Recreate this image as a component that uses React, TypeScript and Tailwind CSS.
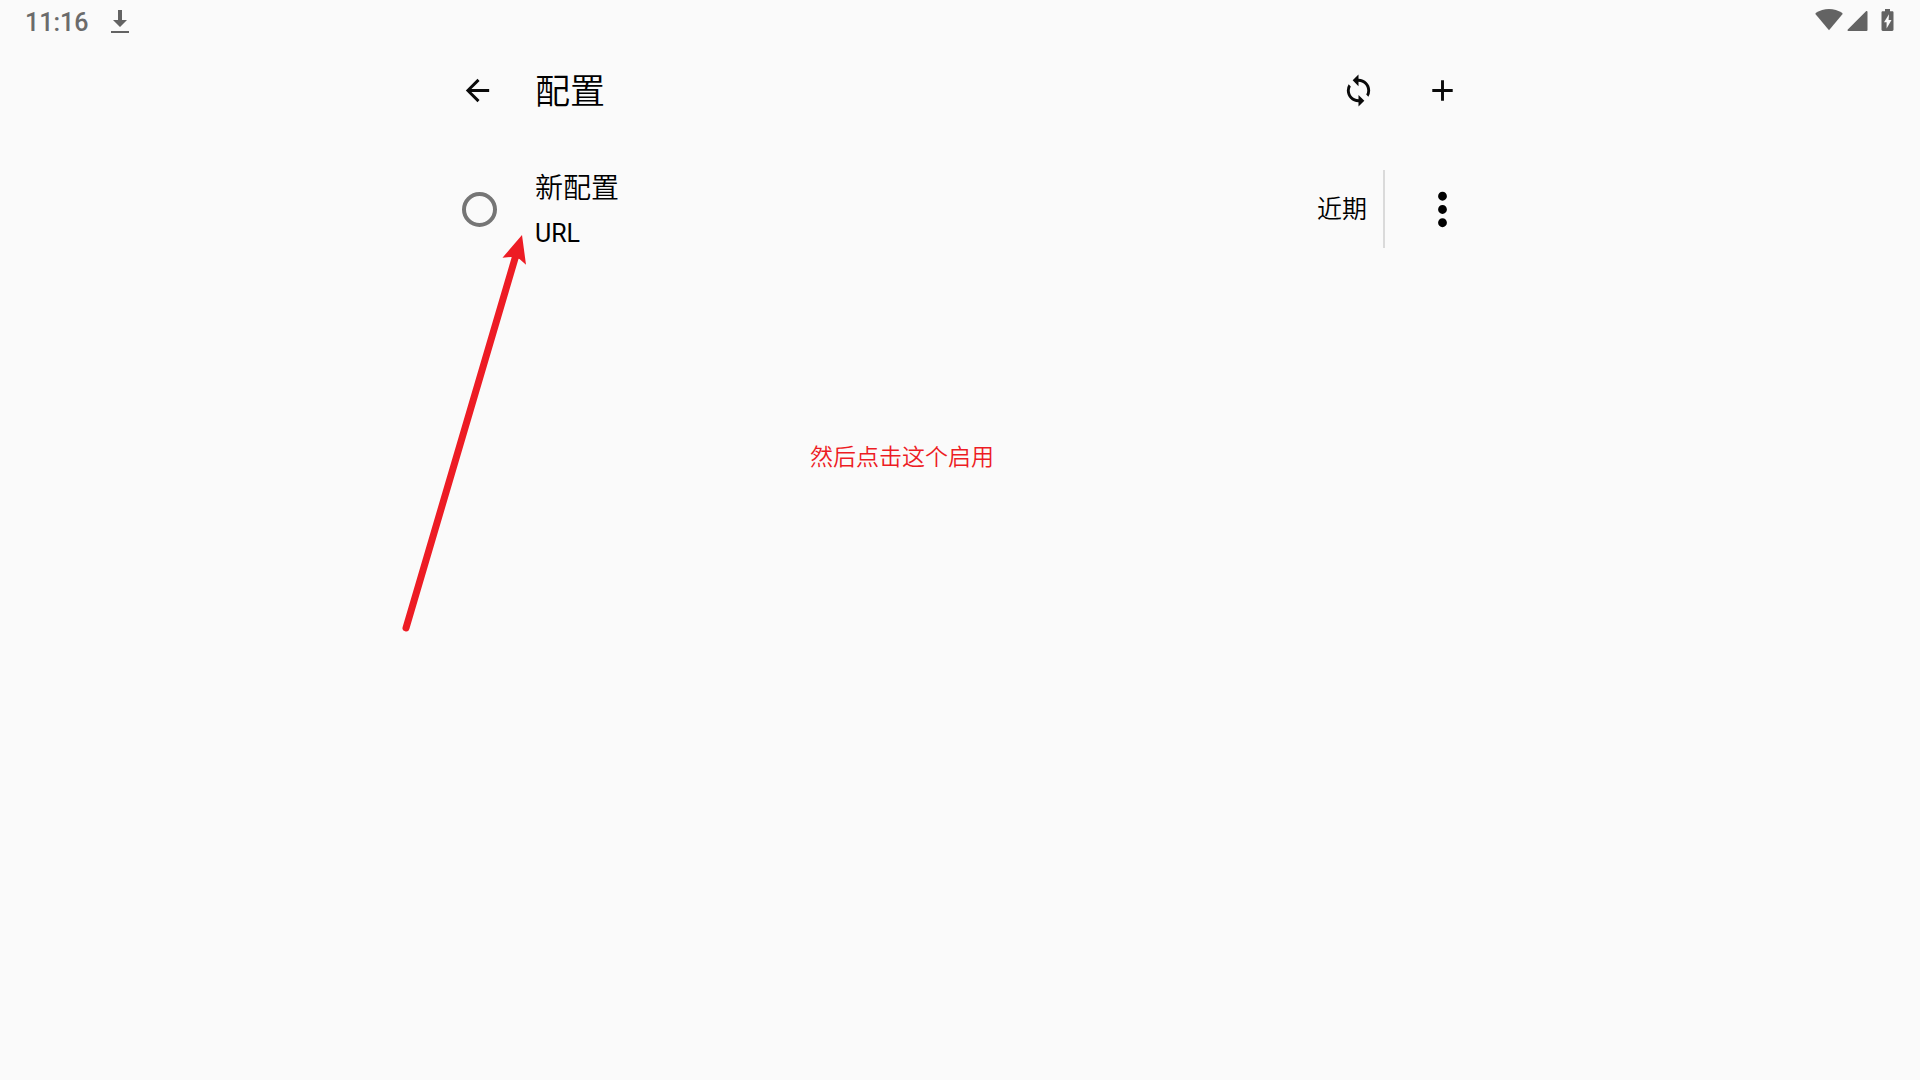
import { useState } from 'react';
import { MdAdd, MdArrowBack, MdMoreVert, MdSync } from 'react-icons/md';

type Profile = {
  id: string;
  name: string;
  type: string;
  updated: string;
};

const profiles: Profile[] = [{ id: 'new', name: '新配置', type: 'URL', updated: '近期' }];

function StatusBar() {
  return (
    <header className="flex h-[42px] items-start justify-between px-[25px] text-[#636363]">
      <div className="flex items-start gap-[23px] pt-2">
        <span className="text-[25px] leading-[30px] font-medium text-[#6b6b6b]">11:16</span>
        <svg className="h-7 w-[18px]" viewBox="0 0 18 28" fill="currentColor" aria-hidden="true">
          <path d="M7 2h4v10h5l-7 7-7-7h5z" />
          <path d="M0 23h18v2H0z" />
        </svg>
      </div>
      <div className="flex items-start gap-1 pt-2 pr-px" aria-hidden="true">
        <svg className="h-6 w-7" viewBox="0 0 28 24" fill="currentColor">
          <path d="M14 22.300.8 6.600C.300 6 .300 5.200 1 4.700 4.800 2.200 9.200.9 14 .9s9.200 1.300 13 3.800c.7.500.7 1.300.2 1.900z" />
        </svg>
        <svg className="h-6 w-[21px]" viewBox="0 0 21 24" fill="currentColor">
          <path d="M20.500 3.800V22a1 1 0 0 1-1 1H1.300C.500 23 .200 22.200.8 21.600L19 3.200c.6-.6 1.500-.2 1.500.6z" />
        </svg>
        <svg className="ml-[9px] h-6 w-[13px]" viewBox="0 0 13 24" fill="currentColor">
          <path
            fillRule="evenodd"
            d="M4 1h5v2.300h2.200c.8 0 1.300.5 1.300 1.300v17c0 .8-.5 1.300-1.300 1.300H1.800C1 22.900.5 22.400.5 21.600v-17c0-.8.5-1.300 1.300-1.300H4zM8 6.300 3 14.300h2.600v6.200L10.500 12H7.600z"
          />
        </svg>
      </div>
    </header>
  );
}

function Toolbar() {
  return (
    <div className="flex h-24 items-center pr-px text-[#0a0a0a]">
      <button type="button" aria-label="返回" className="flex size-[84px] items-center justify-center">
        <MdArrowBack size={35} />
      </button>
      <h1 className="ml-4 flex-1 pt-1.5 text-[35px] leading-[48px] font-[350] text-black">配置</h1>
      <button type="button" aria-label="更新" className="flex size-[84px] items-center justify-center">
        <MdSync size={35} />
      </button>
      <button type="button" aria-label="添加" className="flex size-[84px] items-center justify-center">
        <MdAdd size={35} />
      </button>
    </div>
  );
}

function ProfileRow({ profile, active, onSelect }: { profile: Profile; active: boolean; onSelect: () => void }) {
  return (
    <li className="flex items-center py-7 text-black">
      <label className="flex flex-1 items-center">
        <span className="flex w-[84px] justify-center pl-1">
          <input
            type="radio"
            name="profile"
            checked={active}
            onChange={onSelect}
            className="size-[35px] appearance-none rounded-full border-4 border-[#757575] checked:border-[10px]"
          />
        </span>
        <span className="ml-4 flex flex-1 flex-col gap-1">
          <span className="text-[28px] leading-[46px] font-[350]">{profile.name}</span>
          <span className="text-[25px] leading-9">{profile.type}</span>
        </span>
        <span className="mr-4 pt-[2px] text-[25px] leading-9 font-[350]">{profile.updated}</span>
      </label>
      <div className="h-[78px] w-[2px] shrink-0 bg-[#dadada]" />
      <button type="button" aria-label="更多" className="mr-px ml-[15px] flex size-[84px] items-center justify-center">
        <MdMoreVert size={53} />
      </button>
    </li>
  );
}

export default function App() {
  const [activeId, setActiveId] = useState<string | null>(null);

  return (
    <div className="relative min-h-screen bg-[#fafafa] font-[Roboto,'Noto_Sans_CJK_SC',sans-serif]">
      <StatusBar />
      <main className="mx-auto max-w-[1050px]">
        <Toolbar />
        <ul>
          {profiles.map((p) => (
            <ProfileRow key={p.id} profile={p} active={p.id === activeId} onSelect={() => setActiveId(p.id)} />
          ))}
        </ul>
      </main>

      {/* guide arrow and note over the page */}
      <svg className="pointer-events-none absolute top-[230px] left-[400px] h-[406px] w-[130px]" viewBox="0 0 130 406" aria-hidden="true">
        <path d="M6 398 116 25" stroke="#ed1c24" strokeWidth="7" strokeLinecap="round" />
        <path d="M122 5 102.500 27.700 111 27l8.500 2 6.500 5.700z" fill="#ed1c24" />
      </svg>
      <p className="pointer-events-none absolute top-[441px] left-[810px] text-[23px] leading-[34px] font-[350] text-[#ed1c24]">然后点击这个启用</p>
    </div>
  );
}
